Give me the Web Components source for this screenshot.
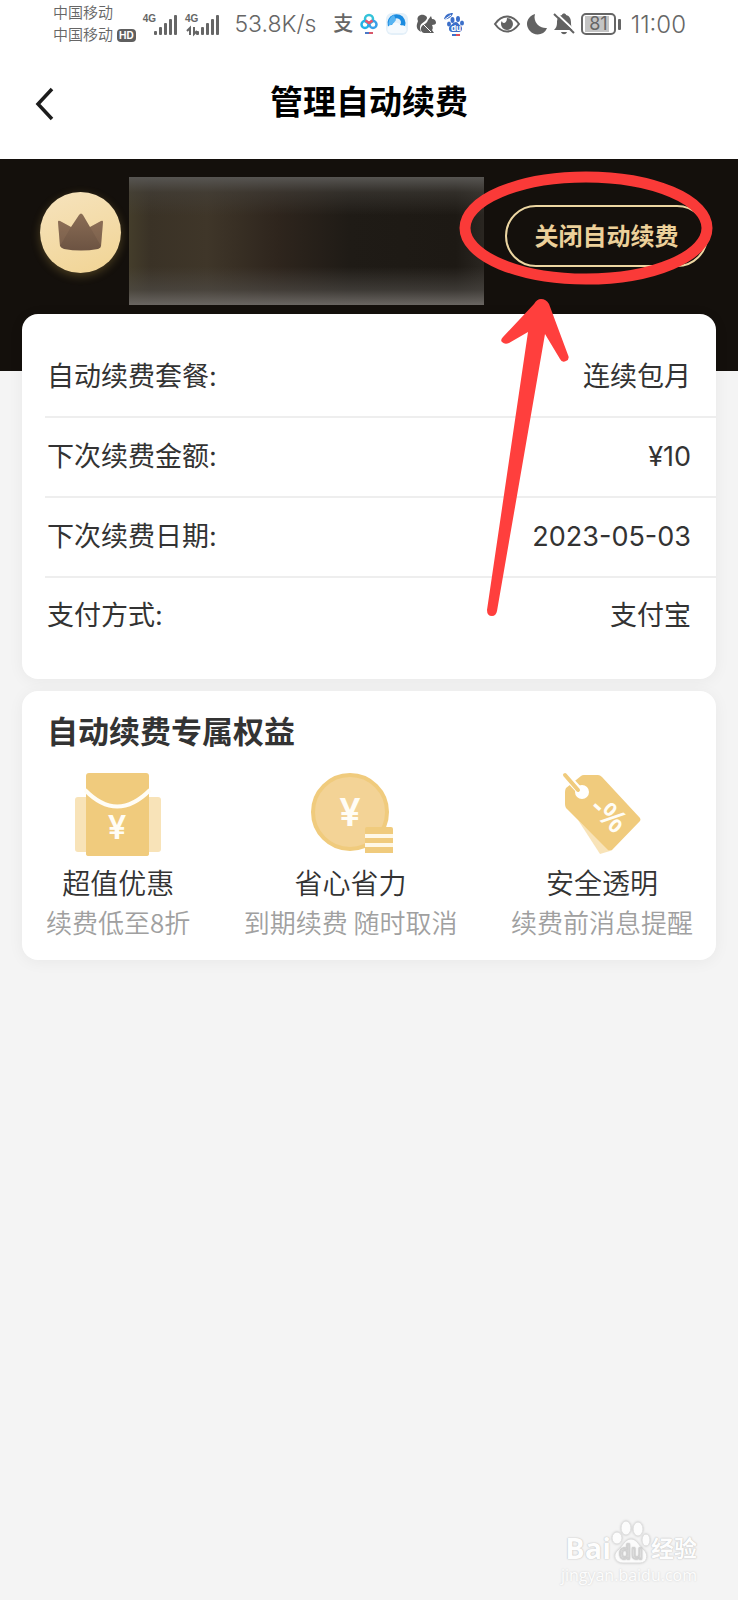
<!DOCTYPE html>
<html lang="zh-CN">
<head>
<meta charset="utf-8">
<meta name="viewport" content="width=device-width, initial-scale=1">
<title>管理自动续费</title>
<style>
  body {
    margin: 0;
    background: #f4f4f4;
    color: #333;
    font-family: Inter, "Noto Sans CJK SC", sans-serif;
  }
</style>
</head>
<body>
<renewal-page></renewal-page>

<script>
// Registers an element whose shadow root is cloned from a template
function define(name, html) {
  const template = document.createElement('template');
  template.innerHTML = html;
  customElements.define(name, class extends HTMLElement {
    constructor() {
      super();
      this.attachShadow({ mode: 'open' });
      this.shadowRoot.appendChild(template.content.cloneNode(true));
    }
  });
}

/* --- ICONS --- */
const ICONS = {
  back: `<svg width="20" height="34" viewBox="0 0 20 34" fill="none" stroke="#1c1c1c" stroke-width="3.500">
    <path d="M17 2 3 17l14 15"/></svg>`,

  signal: `<svg width="24" height="20" viewBox="0 0 24 20" fill="#666">
    <rect x="0" y="16" width="3" height="4" rx="1"/><rect x="5" y="12" width="3" height="8" rx="1"/>
    <rect x="10" y="8" width="3" height="12" rx="1"/><rect x="15" y="4" width="3" height="16" rx="1"/>
    <rect x="20" y="0" width="3" height="20" rx="1"/></svg>`,

  traffic: `<svg width="10" height="8" viewBox="0 0 10 8" fill="none" stroke="#666" stroke-width="2">
    <path d="M3 8V1L0 4M7 0v7l3-3"/></svg>`,

  netdisk: `<svg width="18" height="22" viewBox="0 0 18 22" fill="none" stroke-width="2.500">
    <circle cx="9" cy="6" r="4" stroke="#35c3d9"/>
    <circle cx="5" cy="11.500" r="3.500" stroke="#23b2e6"/>
    <circle cx="13" cy="11.500" r="3.500" stroke="#3aa0e8"/>
    <path d="M5.500 7.500 9 10l3.500-2.500" stroke="#ee5468"/>
    <path d="M5 20h4" stroke="#4a78c8" stroke-width="2"/><path d="M9 20h4" stroke="#d8576a" stroke-width="2"/></svg>`,

  browser: `<svg width="24" height="24" viewBox="0 0 24 24">
    <rect x="1" y="1" width="22" height="22" rx="6" fill="#e4f0f9"/>
    <path d="M7 19A9 9 0 1 1 20 14l-5-1a4 4 0 1 0-7-3Z" fill="#1a8be0"/>
    <path d="M4 14a9 9 0 0 1 5-11l2 5-3 4Z" fill="#57b4f2"/>
    <path d="M6 21a4 4 0 0 1 1-8 5 5 0 0 1 9 1 3.500 3.500 0 0 1 3 7Z" fill="#f5fafe"/></svg>`,

  squirrel: `<svg width="20" height="20" viewBox="0 0 20 20" fill="#5d5d5d">
    <path d="M2 7C0 3 4 0 8 1c3 1 4 3 2 5-2 3-6 3-6 8 0 2 1 4 2 4-4-1-6-4-5-8Z"/>
    <path d="M12 6l3-4 1 3c3 0 4 2 4 4 0 1-2 2-4 2 1 2 1 4 0 5l2 3H8c-4-1-4-6-1-8 2-1 4-2 5-5Z"/>
    <path d="M7 10l8 8" fill="none" stroke="#fff" stroke-width="1"/></svg>`,

  baidu: `<svg width="22" height="24" viewBox="0 0 22 24" fill="#3c6fc9">
    <path d="M1 7C2 3 5 1 10 1 9 5 5 7 1 8Z"/><path d="M1 8 8 3" stroke="#fff" stroke-width="1"/>
    <ellipse cx="9.500" cy="8" rx="2" ry="3"/><ellipse cx="15" cy="7" rx="2" ry="3"/>
    <ellipse cx="19" cy="11" rx="2" ry="2.500"/><ellipse cx="6" cy="12" rx="2" ry="2.500"/>
    <path d="M13 10c2 0 3 3 5 4 2 2 1 6-2 6H9c-3 0-4-4-2-6 2-1 3-4 6-4Z"/>
    <text x="13" y="19" font-size="8" font-weight="700" text-anchor="middle" fill="#fff">du</text>
    <path d="M9 22h4v2H9z"/><path d="M13 22h4v2h-4z" fill="#dd4f5a"/></svg>`,

  eye: `<svg width="28" height="20" viewBox="0 0 28 20">
    <path d="M2 10c7-10 17-10 24 0-7 10-17 10-24 0Z" fill="none" stroke="#626262" stroke-width="2"/>
    <path d="M14 4a6 6 0 1 1-6 6c0-1 0-2 1-3 0 3 5 3 5-3Z" fill="#626262"/></svg>`,

  moon: `<svg width="20" height="22" viewBox="0 0 20 22">
    <path d="M8 1a11 11 0 0 0 12 14C17 23 7 23 3 18-3 11 1 3 8 1Z" fill="#626262"/></svg>`,

  mute: `<svg width="22" height="22" viewBox="0 0 22 22">
    <path d="M9 2c0-2 4-2 4 0 4 1 5 4 5 8 0 4 1 5 3 7H1c2-2 3-4 3-7 0-4 1-7 5-8Z" fill="#626262"/>
    <path d="M8 19h6c-1 3-5 3-6 0Z" fill="#626262"/>
    <path d="M3 0l19 18" stroke="#fff" stroke-width="2"/><path d="M1 1l20 19" stroke="#626262" stroke-width="2"/></svg>`,

  crown: `<svg width="46" height="39" viewBox="0 0 46 39">
    <defs><linearGradient id="crown" x1="0" y1="0" x2="0" y2="1">
      <stop offset="0" stop-color="#8a6d55"/><stop offset="1" stop-color="#6c5342"/></linearGradient></defs>
    <path d="M2 8q-2-1-2 1l2 24q1 2 4 3 17 3 34 0 3-1 3-3l2-24q0-2-2-1L32 14 25 2q-2-3-4 0L13 14Z" fill="url(#crown)"/>
    <path d="M2 8q-2-1-2 1l2 24 11-19ZM43 8q2-1 2 1l-2 24-11-19Z" fill="#a98768" fill-opacity=".2"/></svg>`,

  packet: `<svg width="86" height="84" viewBox="0 0 86 84">
    <rect x="0" y="25" width="86" height="55" rx="3" fill="#f8e3b8"/>
    <path d="M11 4q0-3 3-3h57q3 0 3 3v78q0 2-3 2H14q-3 0-3-2Z" fill="#f0cb7d"/>
    <path d="M10 18q32 33 65 0" fill="none" stroke="#fffdf6" stroke-width="4"/>
    <text x="42" y="67" font-size="33" font-weight="600" text-anchor="middle" fill="#fffdf6">¥</text></svg>`,

  coin: `<svg width="83" height="84" viewBox="0 0 83 84">
    <g transform="translate(2)">
    <circle cx="39" cy="40" r="37" fill="#f3d396" stroke="#f0cb7d" stroke-width="4"/>
    <text x="39" y="54" font-size="38" font-weight="600" text-anchor="middle" fill="#fffdf6">¥</text>
    <path d="M54 57q0-2 2-2h24q2 0 2 2v24H54Z" fill="#f0cb7d"/>
    <path d="M54 64h28M54 73h28" stroke="#fff8e6" stroke-width="4"/></g></svg>`,

  tag: `<svg width="80" height="84" viewBox="0 0 80 84">
    <g transform="translate(2)">
    <path d="M14 48 36 82l10-3Z" fill="#f8e3b8"/>
    <path d="M17 4q1-1 3-1h14q2 0 4 2l38 41q1 2 0 3L48 78q-2 1-4 0L2 36q-1-2-1-4V20q0-2 1-4Z" fill="#f0cb7d"/>
    <circle cx="18" cy="20" r="7" fill="#fff"/>
    <path d="M3 5l13 14" stroke="#fff" stroke-width="7"/>
    <path d="M1 3l13 15" stroke="#f0cb7d" stroke-width="4" stroke-linecap="round"/>
    <text transform="translate(24 38) rotate(42)" font-family="Noto Sans, sans-serif" font-size="31" font-weight="600" fill="#fffdf6">-%</text></g></svg>`
};

customElements.define('app-icon', class extends HTMLElement {
  constructor() {
    super();
    this.attachShadow({ mode: 'open' });
  }
  connectedCallback() {
    this.shadowRoot.innerHTML = `
      <style>:host { display: block; flex: none; } svg { display: block; overflow: visible; }</style>
      ${ICONS[this.getAttribute('name')]}`;
  }
});

/* --- STATUS BAR --- */
define('status-bar', `
  <style>
    :host { display: flex; align-items: center; box-sizing: border-box; height: 48px; padding: 0 52px 0 53px; color: #666; background: #fff; }
    .carriers { font-size: 15px; line-height: 22px; font-weight: 350; }
    .carriers div { display: flex; align-items: center; gap: 4px; height: 22px; }
    .hd { padding: 0 2px; border-radius: 4px; background: #5f5f5f; color: #fff; font-size: 10px; line-height: 13px; font-weight: 700; }
    .signal { display: flex; align-items: flex-end; margin-left: 7px; }
    .net { display: flex; flex-direction: column; align-items: center; height: 22px; margin-right: -2px; font: 700 10px/12px "Liberation Sans", sans-serif; }
    .net app-icon { margin-top: 2px; }
    .speed { margin-left: 14px; font-size: 23px; font-weight: 350; }
    .apps, .system { display: flex; align-items: center; }
    .apps { gap: 7px; margin-left: 17px; }
    .alipay { font-size: 20px; line-height: 24px; font-weight: 500; }
    .system { gap: 6px; margin-left: auto; }
    .battery { display: flex; align-items: center; gap: 2px; }
    .cell { padding: 1px 2px; border: 2px solid #666; border-radius: 5px; }
    .level { display: block; padding: 0 4px; background: linear-gradient(90deg, #c4c4c4 90%, transparent 90%); font-size: 18px; line-height: 16px; }
    .cap { width: 3px; height: 11px; border-radius: 1px; background: #666; }
    .time { margin-left: 4px; font-size: 24px; font-weight: 350; }
  </style>
  <div class="carriers">
    <div>中国移动</div>
    <div>中国移动<span class="hd">HD</span></div>
  </div>
  <div class="signal"><span class="net">4G</span><app-icon name="signal"></app-icon></div>
  <div class="signal"><span class="net">4G<app-icon name="traffic"></app-icon></span><app-icon name="signal"></app-icon></div>
  <span class="speed">53.8K/s</span>
  <div class="apps">
    <span class="alipay">支</span>
    <app-icon name="netdisk"></app-icon>
    <app-icon name="browser"></app-icon>
    <app-icon name="squirrel"></app-icon>
    <app-icon name="baidu"></app-icon>
  </div>
  <div class="system">
    <app-icon name="eye"></app-icon>
    <app-icon name="moon"></app-icon>
    <app-icon name="mute"></app-icon>
    <span class="battery"><span class="cell"><span class="level">81</span></span><span class="cap"></span></span>
    <span class="time">11:00</span>
  </div>
`);

/* --- TITLE BAR --- */
define('page-header', `
  <style>
    :host { display: grid; grid-template-columns: 90px 1fr 90px; align-items: center; height: 111px; background: #fff; }
    button { display: flex; justify-content: flex-start; padding: 12px 0 12px 35px; border: 0; background: none; }
    h1 { margin: 0; padding-bottom: 4px; color: #000; font-size: 33px; line-height: 48px; font-weight: 700; text-align: center; }
  </style>
  <button type="button" aria-label="返回"><app-icon name="back"></app-icon></button>
  <h1><slot></slot></h1>
`);

/* --- MEMBER BANNER --- */
define('member-banner', `
  <style>
    :host { display: flex; align-items: flex-start; padding: 18px 30px 66px 40px; background: #14100c; }
    .avatar { display: flex; align-items: center; justify-content: center; flex: none; width: 81px; height: 81px; margin: 15px 8px 0 0; border-radius: 50%;
      background: linear-gradient(160deg, #f6e3bd, #f1d494); box-shadow: 0 3px 10px rgba(240, 200, 90, .25); }
    .blurred { flex: 1; height: 128px; margin-right: 21px;
      background:
        linear-gradient(180deg, #575552 0, rgba(70, 67, 62, .5) 12%, transparent 30%, transparent 70%, rgba(80, 77, 73, .6) 88%, #6a6662 100%),
        linear-gradient(90deg, #443d2b 0, #3a3226 6%, #3f3629 22%, #2e251d 42%, #1f1b16 62%, #1d1914 92%, #2a2621 100%); }
    button { flex: none; width: 203px; height: 62px; margin-top: 28px; padding: 2px 0 0; border: 2px solid #ecd6a2; border-radius: 31px; background: none;
      color: #ecd09a; font-family: inherit; font-size: 24px; line-height: 36px; font-weight: 600; }
  </style>
  <div class="avatar"><app-icon name="crown"></app-icon></div>
  <div class="blurred"></div>
  <button type="button"><slot></slot></button>
`);

/* --- WHITE CARD --- */
define('panel-card', `
  <style>
    :host { display: block; position: relative; margin: 0 22px 12px; border-radius: 16px; background: #fff; box-shadow: 0 2px 16px rgba(0, 0, 0, .05); }
  </style>
  <slot></slot>
`);

define('info-row', `
  <style>
    :host { display: flex; align-items: center; justify-content: space-between; box-sizing: border-box; height: 80px; margin-left: 23px; padding: 0 25px 0 2px;
      border-bottom: 2px solid #eee; font-size: 27px; line-height: 40px; }
    :host(:last-of-type) { height: 76px; border-bottom: 0; }
  </style>
  <span><slot name="label"></slot></span>
  <span><slot></slot></span>
`);

define('benefit-item', `
  <style>
    :host { display: flex; flex-direction: column; align-items: center; white-space: nowrap; }
    .name { margin-top: 6px; font-size: 28px; line-height: 40px; font-weight: 350; }
    .note { color: #a0a0a0; font-size: 26px; line-height: 40px; font-weight: 350; }
    .name, .note { font-family: "Noto Sans CJK SC", sans-serif; }
  </style>
  <slot name="icon"></slot>
  <span class="name"><slot name="name"></slot></span>
  <span class="note"><slot></slot></span>
`);

/* --- RED CIRCLE AND ARROW, drawn over the content --- */
define('red-marker', `
  <style>
    :host { position: absolute; top: 170px; right: 21px; z-index: 2; pointer-events: none; }
    svg { display: block; }
  </style>
  <svg width="260" height="450" viewBox="0 0 260 450" aria-hidden="true">
    <ellipse cx="129" cy="58" rx="121" ry="51" fill="none" stroke="#fa3a38" stroke-width="11"/>
    <path d="M84 129q-4 0-7 5L46 167q-3 3-1 5 3 3 7 1l19-11L30 440q0 6 5 6 4 0 5-5L88 164l15 25q2 4 6 2t2-6L92 134q-3-5-8-5Z" fill="#ff3f3d"/>
  </svg>
`);

/* --- WATERMARK --- */
define('site-watermark', `
  <style>
    :host { display: block; align-self: flex-end; margin: auto 41px 14px 0; color: #fdfdfd; font-family: "Open Sans", "Noto Sans CJK SC", sans-serif;
      text-shadow: 0 0 1px #bbb, 0 0 2px #ccc; }
    .logo { display: flex; align-items: flex-end; justify-content: flex-end; height: 46px; font-weight: 700; line-height: 32px; }
    .bai { font-size: 29px; }
    .jy { font-size: 23px; }
    svg { display: block; filter: drop-shadow(0 0 1px #ccc); }
    .url { font-size: 16px; line-height: 22px; text-align: right; text-shadow: 0 0 2px #ccc; }
  </style>
  <div class="logo">
    <span class="bai">Bai</span>
    <svg width="40" height="46" viewBox="0 0 40 46" fill="#fcfcfc" stroke="#ddd">
      <ellipse cx="6" cy="20" rx="5" ry="6"/><ellipse cx="15" cy="10" rx="5" ry="7"/>
      <ellipse cx="27" cy="11" rx="5" ry="7"/><ellipse cx="35" cy="22" rx="4" ry="6"/>
      <path d="M20 21c6 0 8 7 13 11 5 5 3 13-4 13H12c-8 0-11-8-5-13 5-4 7-11 13-11Z"/>
      <text x="20" y="41" font-size="19" font-weight="600" text-anchor="middle" fill="#f4f4f4" stroke="#d4d4d4">du</text>
    </svg>
    <span class="jy">经验</span>
  </div>
  <div class="url">jingyan.baidu.com</div>
`);

/* --- PAGE --- */
define('renewal-page', `
  <style>
    :host { display: flex; flex-direction: column; position: relative; min-height: 100vh; }
    .plan { margin-top: -57px; padding: 24px 0 25px; }
    .benefits { padding: 18px 23px 18px 24px; }
    h2 { margin: 0 0 17px 1px; font-size: 31px; line-height: 46px; font-weight: 700; }
    .list { display: flex; justify-content: space-between; }
  </style>
  <status-bar></status-bar>
  <page-header>管理自动续费</page-header>
  <member-banner>关闭自动续费</member-banner>
  <panel-card class="plan">
    <info-row><span slot="label">自动续费套餐:</span>连续包月</info-row>
    <info-row><span slot="label">下次续费金额:</span>¥10</info-row>
    <info-row><span slot="label">下次续费日期:</span>2023-05-03</info-row>
    <info-row><span slot="label">支付方式:</span>支付宝</info-row>
  </panel-card>
  <panel-card class="benefits">
    <h2>自动续费专属权益</h2>
    <div class="list">
      <benefit-item><app-icon slot="icon" name="packet"></app-icon><span slot="name">超值优惠</span>续费低至8折</benefit-item>
      <benefit-item><app-icon slot="icon" name="coin"></app-icon><span slot="name">省心省力</span>到期续费 随时取消</benefit-item>
      <benefit-item><app-icon slot="icon" name="tag"></app-icon><span slot="name">安全透明</span>续费前消息提醒</benefit-item>
    </div>
  </panel-card>
  <site-watermark></site-watermark>
  <red-marker></red-marker>
`);
</script>
</body>
</html>
